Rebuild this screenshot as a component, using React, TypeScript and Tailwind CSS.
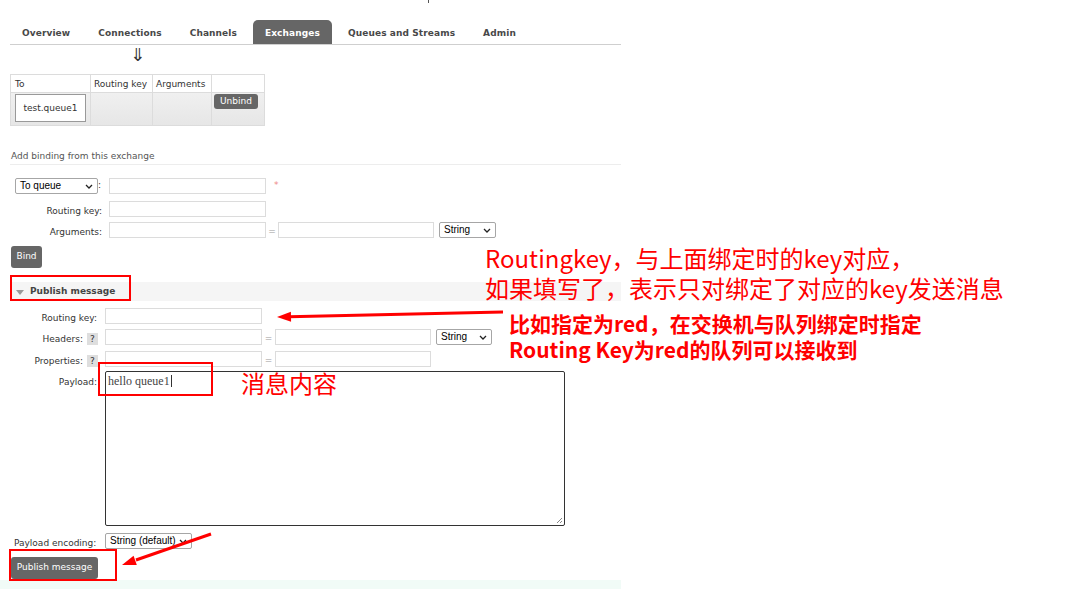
import React from "react"

const tabs = ["Overview", "Connections", "Channels", "Exchanges", "Queues and Streams", "Admin"]

function Input({ w }: { w: string }) {
  return <div className={`h-[16px] border border-[#dcdcdc] bg-white ${w}`} />
}

function Select({ label, w }: { label: string; w: string }) {
  return (
    <div
      className={`flex h-[16px] items-center justify-between rounded-[2px] border border-[#a6a6a6] bg-white pl-[4px] pr-[4px] font-['Liberation_Sans',Arial,sans-serif] text-[10px] text-black ${w}`}
    >
      <span className="leading-[14px]">{label}</span>
      <svg width="8" height="5" viewBox="0 0 8 5">
        <path d="M1 1l3 3 3-3" stroke="#222" strokeWidth="1.3" fill="none" />
      </svg>
    </div>
  )
}

function Help() {
  return (
    <span className="ml-[4px] flex h-[12px] w-[11px] items-center justify-center bg-[#dedede] text-[9px] text-[#333]">
      ?
    </span>
  )
}

function Button({ children, w }: { children: React.ReactNode; w: string }) {
  return (
    <div
      className={`flex h-[22px] items-center justify-center rounded-[3px] bg-[#666] text-[9px] text-white ${w}`}
    >
      {children}
    </div>
  )
}

export default function App() {
  return (
    <div className="relative h-[599px] w-[1081px] overflow-hidden bg-white font-['DejaVu_Sans',Verdana,sans-serif] text-[#333]">
      <div className="ml-[428px] h-[3px] w-px bg-[#555]" />

      {/* tabs */}
      <div className="ml-[10px] mt-[17px] flex w-[611px] gap-[4px] border-b border-[#cfcfcf]">
        {tabs.map((t) => (
          <div
            key={t}
            className={`flex h-[24px] items-end px-[12px] pb-[5px] text-[9px] leading-[12px] font-bold tracking-[0.1px] ${
              t === "Exchanges" ? "rounded-t-[5px] bg-[#666] text-white" : "text-[#484848]"
            }`}
          >
            {t}
          </div>
        ))}
      </div>

      <div className="h-[29px] pl-[130px] pt-[1px] text-[18px] leading-[18px] text-[#333]">⇓</div>

      {/* bindings table */}
      <table className="ml-[10px] border-collapse text-[9px]">
        <thead>
          <tr className="h-[18px] bg-white">
            <th className="w-[79px] border border-[#dcdcdc] pl-[4px] pt-[2px] text-left font-normal">To</th>
            <th className="w-[62px] border border-[#dcdcdc] pl-[3px] pt-[2px] text-left font-normal">Routing key</th>
            <th className="w-[59px] border border-[#dcdcdc] pl-[3px] pt-[2px] text-left font-normal">Arguments</th>
            <th className="w-[53px] border border-[#dcdcdc]" />
          </tr>
        </thead>
        <tbody>
          <tr className="h-[33px] bg-gradient-to-b from-[#f0f0f0] to-[#e6e6e6]">
            <td className="border border-[#dcdcdc] px-[4px] py-[1px] align-top">
              <div className="flex h-[28px] w-[71px] items-center justify-center border border-[#999] bg-white pt-[1px]">
                test.queue1
              </div>
            </td>
            <td className="border border-[#dcdcdc]" />
            <td className="border border-[#dcdcdc]" />
            <td className="border border-[#dcdcdc] pl-[2px] pt-[1px] align-top">
              <div className="flex h-[15px] w-[44px] items-center justify-center rounded-[3px] bg-[#666] text-white">
                Unbind
              </div>
            </td>
          </tr>
        </tbody>
      </table>

      <div className="ml-[10px] mt-[24px] w-[611px] border-b border-[#ededed] pb-[2px] pl-[1px] text-[9px] leading-[12px] text-[#555]">
        Add binding from this exchange
      </div>

      {/* binding form */}
      <div className="ml-[10px] mt-[13px] flex items-center">
        <div className="flex w-[92px] items-center justify-end">
          <Select label="To queue" w="w-[83px]" />
          <span className="w-[4px] text-[9px]">:</span>
        </div>
        <div className="ml-[7px]">
          <Input w="w-[157px]" />
        </div>
        <span className="ml-[8px] text-[9px] text-[#e88]">*</span>
      </div>
      <div className="ml-[10px] mt-[7px] flex items-end">
        <div className="w-[92px] text-right text-[9px] leading-[12px]">Routing key:</div>
        <div className="ml-[7px]">
          <Input w="w-[157px]" />
        </div>
      </div>
      <div className="ml-[10px] mt-[5px] flex items-end">
        <div className="w-[92px] text-right text-[9px] leading-[12px]">Arguments:</div>
        <div className="ml-[7px]">
          <Input w="w-[157px]" />
        </div>
        <span className="w-[12px] pb-[1px] text-center text-[9px] leading-[12px] text-[#999]">=</span>
        <Input w="w-[156px]" />
        <div className="ml-[5px]">
          <Select label="String" w="w-[57px]" />
        </div>
      </div>
      <div className="ml-[11px] mt-[8px]">
        <Button w="w-[31px]">Bind</Button>
      </div>

      {/* publish message */}
      <div className="ml-[10px] mt-[14px] flex h-[19px] w-[611px] items-center bg-[#f5f5f5] pt-[1px]">
        <svg className="ml-[6px]" width="8" height="5" viewBox="0 0 8 5">
          <path d="M0 0h8L4 5z" fill="#999" />
        </svg>
        <span className="ml-[6px] text-[9px] font-bold text-[#444]">Publish message</span>
      </div>

      <div className="ml-[10px] mt-[7px] flex items-end">
        <div className="w-[87px] text-right text-[9px] leading-[12px]">Routing key:</div>
        <div className="ml-[8px]">
          <Input w="w-[157px]" />
        </div>
      </div>
      <div className="ml-[10px] mt-[5px] flex items-end">
        <div className="flex w-[88px] items-end justify-end text-[9px] leading-[12px]">
          Headers:
          <Help />
        </div>
        <div className="ml-[7px]">
          <Input w="w-[157px]" />
        </div>
        <span className="w-[13px] pb-[1px] text-center text-[9px] leading-[12px] text-[#999]">=</span>
        <Input w="w-[156px]" />
        <div className="ml-[5px]">
          <Select label="String" w="w-[56px]" />
        </div>
      </div>
      <div className="ml-[10px] mt-[6px] flex items-end">
        <div className="flex w-[88px] items-end justify-end text-[9px] leading-[12px]">
          Properties:
          <Help />
        </div>
        <div className="ml-[7px]">
          <Input w="w-[157px]" />
        </div>
        <span className="w-[13px] pb-[1px] text-center text-[9px] leading-[12px] text-[#999]">=</span>
        <Input w="w-[156px]" />
      </div>
      <div className="ml-[10px] mt-[4px] flex items-start">
        <div className="w-[87px] pt-[5px] text-right text-[9px] leading-[12px]">Payload:</div>
        <div className="relative ml-[8px] h-[155px] w-[460px] rounded-[2px] border border-[#333] bg-white pl-[2px] pt-[1px] text-[12px] leading-[14px]">
          <span className="font-['Liberation_Serif',serif] text-[12px] leading-[14px] text-[#444]">hello queue1</span>
          <span className="ml-px inline-block h-[12px] w-px translate-y-[2px] bg-[#333]" />
          <svg className="absolute bottom-[1px] right-[1px]" width="7" height="7" viewBox="0 0 7 7">
            <path d="M6 1L1 6M6 4L4 6" stroke="#888" strokeWidth="1" />
          </svg>
        </div>
      </div>
      <div className="ml-[14px] mt-[7px] flex items-end">
        <div className="w-[83px] text-[9px] leading-[12px]">Payload encoding:</div>
        <div className="ml-[8px]">
          <Select label="String (default)" w="w-[87px]" />
        </div>
      </div>
      <div className="ml-[11px] mt-[8px]">
        <Button w="w-[87px]">Publish message</Button>
      </div>
      <div className="mt-[1px] h-[9px] w-[621px] bg-[#f1fbf7]" />

      {/* annotations */}
      <div className="absolute left-[10px] top-[275px] h-[26px] w-[121px] border-2 border-[#ff0000]" />
      <div className="absolute left-[98px] top-[362px] h-[34px] w-[115px] border-2 border-[#ff0000]" />
      <div className="absolute left-[9px] top-[549px] h-[32px] w-[108px] border-2 border-[#ff0000]" />

      <div className="absolute left-[485px] top-[243px] font-['Noto_Sans_CJK_SC',sans-serif] text-[24px] leading-[30px] whitespace-nowrap text-[#ff0000]">
        <div>Routingkey，与上面绑定时的key对应，</div>
        <div>如果填写了，表示只对绑定了对应的key发送消息</div>
      </div>
      <div className="absolute left-[509px] top-[310px] font-['Noto_Sans_CJK_SC',sans-serif] text-[21px] font-bold leading-[26px] whitespace-nowrap text-[#ff0000]">
        <div>比如指定为red，在交换机与队列绑定时指定</div>
        <div>Routing Key为red的队列可以接收到</div>
      </div>
      <div className="absolute left-[241px] top-[368px] font-['Noto_Sans_CJK_SC',sans-serif] text-[24px] leading-[30px] text-[#ff0000]">
        消息内容
      </div>

      <svg className="pointer-events-none absolute left-0 top-0" width="1081" height="599">
        <line x1="503" y1="312" x2="289" y2="316.7" stroke="#ff0000" strokeWidth="3" />
        <polygon points="277,317 291.1,321.7 290.9,311.7" fill="#ff0000" />
        <line x1="211" y1="534" x2="136" y2="560" stroke="#ff0000" strokeWidth="3" />
        <polygon points="122,565 136.8,565.1 133.6,555.7" fill="#ff0000" />
      </svg>
    </div>
  )
}
